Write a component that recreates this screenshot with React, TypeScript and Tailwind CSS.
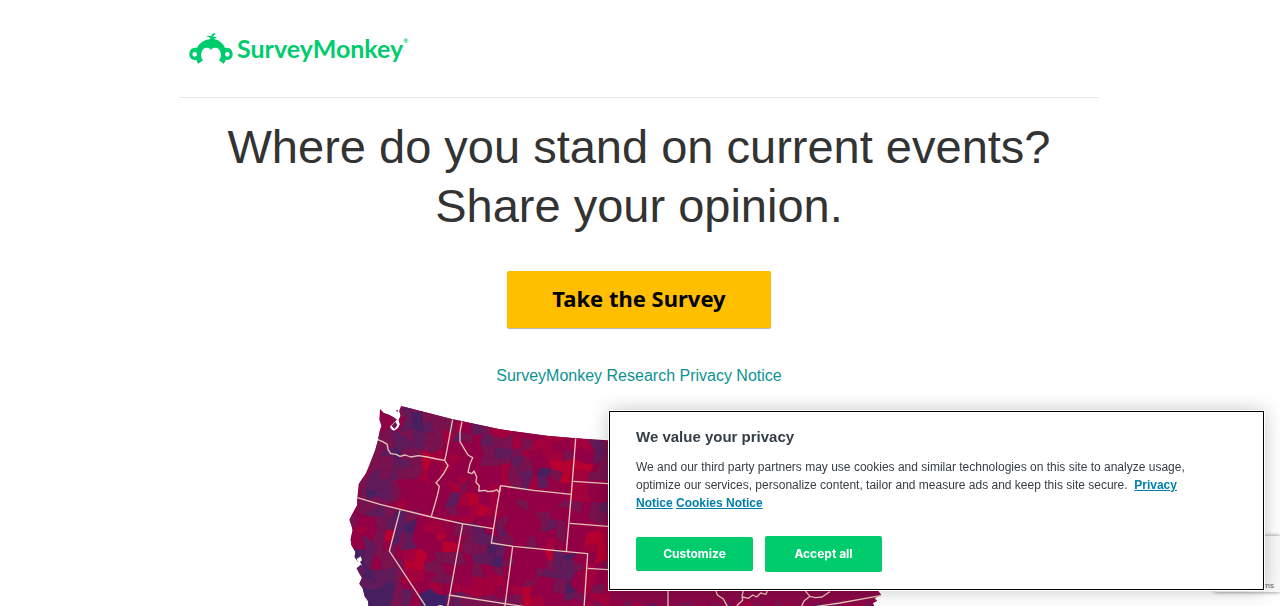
// One character per county-sized patch, see PATCH_FILL
const PATCHES = [
  ".....vmmcc................",
  "...cmvpmmmccmcc............",
  "...ccvpvmmrcvmrrcccrrcc....",
  "...mvmvmmrvmcvmmrmrrccrrvmm",
  "..mmvvvmmccccmvvmrcrrmccvmv",
  "..mvpmmhrcrccmmmvmcchhhhcmr",
  "..mmvvmhcrcccccrmvcpmhrrmmv",
  "..vmvmmrcccrcccrmvrvccrrccr",
  ".mvvmcccccrmccrcccccccrrccr",
  ".mpvmcccccvrhcrccmcccmmcmvm",
  "cmmmcrccccmcrhrccccmccccmmc",
  "cmvvmpmcccrrrccmcccmvmcccrr",
  "mccmvvpcrrcmmvcvcccccmcchhr",
  "crcmhmvcchccmvvmmcmcrcccrhr",
  "ccvmcmvccchrmmpvcccchvpcchr",
  "mpvmmcrhcmmmcvvpmcccmvvmrcm",
  "mpvcmmhhmmcccmcmcccmvvvcrcr",
  "mvpvvmrrcmmccrrrccmccmpcrmr",
  "mvvvpmcccrcrrrrccrhcccvmcrr",
  "mvpppmvcppmvmmmmmmhrccccrmrcmrcpcmmrcmvcrmcmrcmvcmcrmcvm",
  "mvpppmvcppmvmmmmmmhrccccrmrrcmmcvcrmcmrcmcmrcmcmvcrmcmvc",
];

const PATCH_FILL: Record<string, string> = {
  p: "#472062",
  v: "#601b5b",
  m: "#78134f",
  c: "#930046",
  r: "#a3003e",
  h: "#b80031",
};

const LAND =
  "M120 42L132 54L148 60L163 68L170 74L160 84L150 94L152 102L162 108L174 100L180 88L176 76L182 62L178 48L183 33L338 73L480 103L620 122L707 130L804 136L1100 140L1560 300L1640 560L1615 588L1624 600L1604 610L1612 618L1598 624L1606 640L86 640L84 618L74 604L68 580L58 566L66 548L56 532L50 520L62 510L52 498L44 486L46 470L34 450L32 432L38 406L34 390L28 374L44 344L52 330V308L56 268L78 234L94 196L106 164L114 136L118 112L124 92L118 74Z";

const BORDERS = [
  // Washington / Oregon / Idaho
  "M114 134L128 140L142 148L144 164L152 176L168 178L180 184L196 180L212 186L236 182L262 186L290 192L314 196L318 180L338 74",
  "M314 196L324 212L312 234L300 250L288 264L298 274L292 302L284 330L274 364",
  "M52 308L120 328L274 366L366 386L460 401",
  "M366 80L360 110V140L372 160L384 180L398 188L390 206L384 232L396 236L402 228L410 246L408 262L418 272L416 288L436 286L444 290L462 288L470 284L478 292L482 272",
  // Montana / Wyoming / Dakotas
  "M482 272L580 286L694 298M707 130L694 298L679 470",
  "M482 272L470 340L454 444L520 454L679 470L743 476L732 640",
  "M700 259L804 266M690 385L804 394M743 520L804 524",
  // California / Nevada / Utah / Colorado
  "M180 346L148 468L256 632M368 386L322 640M518 454L494 640",
  "M326 600L494 626L560 636",
  // Lower edge, east of the plains
  "M984 588V640M1128 588L1132 600L1150 612L1162 634M1210 588L1206 602L1208 616L1190 632M1208 606L1226 610L1238 600L1250 606L1262 594L1278 598L1282 588",
  "M1396 588L1410 604L1392 618L1384 636M1410 604L1426 608L1446 606L1470 590M1430 634L1500 624L1622 602",
];

const CELL = 30;

// Fixed pseudo-random nudge plus a slight tilt, so neighbouring patches share ragged corners
function corner(col: number, row: number) {
  const a = Math.abs(Math.sin(col * 12.9 + row * 78.2) * 437) % 1;
  const b = Math.abs(Math.sin(col * 39.3 + row * 11.1) * 751) % 1;
  const tilt = Math.min(col, 27) - 13;
  return [
    24 + col * CELL + Math.round(a * 22 - 11) - (row - 10) * 2,
    30 + row * CELL + Math.round(b * 22 - 11) + tilt * 2,
  ];
}

function CountyMap() {
  return (
    <svg
      viewBox="24 30 1746 603"
      className="block w-[582px] max-w-full"
      role="img"
      aria-label="Map of the United States by county"
    >
      <defs>
        <clipPath id="land">
          <path d={LAND} />
        </clipPath>
      </defs>
      <g clipPath="url(#land)">
        <rect x="24" y="30" width="1746" height="620" fill="#8b0848" />
        {PATCHES.map((line, row) =>
          line.split("").map((key, col) => {
            if (!PATCH_FILL[key]) return null;
            const tl = corner(col, row);
            const tr = corner(col + 1, row);
            const br = corner(col + 1, row + 1);
            const bl = corner(col, row + 1);
            const points = [tl, tr, br, bl].map((p) => p.join(",")).join(" ");
            return (
              <polygon
                key={`${row}-${col}`}
                points={points}
                fill={PATCH_FILL[key]}
                stroke={PATCH_FILL[key]}
                strokeWidth="1"
              />
            );
          })
        )}
        <path d="M258 594L322 602L316 640H250Z" fill="#3d2068" />
        <path d="M182 348L198 352L180 440L152 462Z" fill="#5a1c62" />
      </g>
      <g fill="none" stroke="#e6c3b8" strokeWidth="4" strokeLinejoin="round">
        {BORDERS.map((d) => (
          <path key={d} d={d} />
        ))}
      </g>
      <path d="M154 92L166 80L172 90L164 102ZM168 46L174 44L172 52Z" fill="#6b1755" />
      <path d="M50 492L62 484L66 496L60 500L66 512L56 506Z" fill="#fff" />
      <path d="M290 634Q300 626 312 634Z" fill="#e6c3b8" />
    </svg>
  );
}

function Logo() {
  return (
    <a href="#" aria-label="SurveyMonkey" className="flex items-center gap-1 text-[#00cc6e]">
      <svg viewBox="0 0 132 93" className="h-[31px] w-11" fill="currentColor" fillRule="evenodd" aria-hidden="true">
        <path d="M64 18C63 13 58 10 50 11Q56 6 66 10Q69 1 77 0L80 4Q74 6 72 12Q76 9 82 12L83 15Q78 15 75 18Q98 22 108 45C122 42 131 51 131 64C131 77 120 84 110 80Q109 86 104 92L90 82Q98 72 95 59Q90 43 78 44Q70 44 66 50Q62 44 54 44Q42 43 37 59Q34 72 42 82L28 92Q23 86 22 80C12 84 1 77 1 64C1 51 10 42 24 45Q34 22 64 18ZM17 57A7 7 0 1 0 17 71A7 7 0 1 0 17 57ZM115 57A7 7 0 1 0 115 71A7 7 0 1 0 115 57Z" />
      </svg>
      <span className="flex font-[Lato] text-[25px] leading-[34px] font-bold">
        SurveyMonkey
        <span className="pt-1 text-[6px] leading-3">®</span>
      </span>
    </a>
  );
}

function CookieBanner() {
  const link = "font-bold text-[#007faa] underline";
  const button = "w-[117px] rounded-xs bg-[#00cc6e] font-[Inter] text-xs font-bold text-white";

  return (
    <section
      role="dialog"
      aria-labelledby="privacy-title"
      className="fixed right-4 bottom-4 w-[655px] max-w-[calc(100%-32px)] border border-black bg-white px-[26px] pt-4 pb-[17px] text-[#333e48] shadow-[0_0_0_1px_#fff,0_0_18px_rgba(0,0,0,0.25)]"
    >
      <h2 id="privacy-title" className="text-[15px] leading-[18px] font-bold">
        We value your privacy
      </h2>
      <p className="mt-3 pr-8 text-xs leading-[18px]">
        We and our third party partners may use cookies and similar technologies on this site to analyze usage, optimize
        our services, personalize content, tailor and measure ads and keep this site secure. &nbsp;
        <a href="#" className={link}>
          Privacy Notice
        </a>{" "}
        <a href="#" className={link}>
          Cookies Notice
        </a>
      </p>
      <div className="mt-6 flex items-center gap-3">
        <button type="button" className={`${button} h-[34px]`}>
          Customize
        </button>
        <button type="button" className={`${button} h-9`}>
          Accept all
        </button>
      </div>
    </section>
  );
}

export default function App() {
  return (
    <div className="h-screen overflow-hidden bg-white pr-0.5 font-['Liberation_Sans',sans-serif] text-[#333]">
      <div className="mx-auto max-w-[920px]">
        <header className="border-b border-[#e8e8e8] px-2.5 pt-[31px] pb-8">
          <Logo />
        </header>

        <main className="flex flex-col items-center pt-[19px]">
          <h1 className="text-center text-[47px] leading-[59px]">
            Where do you stand on current events?
            <br />
            Share your opinion.
          </h1>
          <button
            type="button"
            className="mt-9 h-[57px] w-[264px] rounded-xs bg-[#ffbf00] pb-0.5 font-['Noto_Sans'] text-[22px] font-bold text-black shadow-[0_1px_1px_rgba(0,0,0,0.3)]"
          >
            Take the Survey
          </button>
          <a href="#" className="mt-9 mb-[17px] text-base text-[#0b9292]">
            SurveyMonkey Research Privacy Notice
          </a>
          <CountyMap />
        </main>
      </div>

      {/* reCAPTCHA badge */}
      <div className="fixed right-0 bottom-3.5 flex h-14 w-[66px] items-end justify-end overflow-hidden rounded-l-xs bg-[#f9f9f9] pr-1.5 text-[8px] whitespace-nowrap text-[#555] shadow-[0_0_4px_gray]">
        Privacy - Terms
      </div>
      <CookieBanner />
    </div>
  );
}
